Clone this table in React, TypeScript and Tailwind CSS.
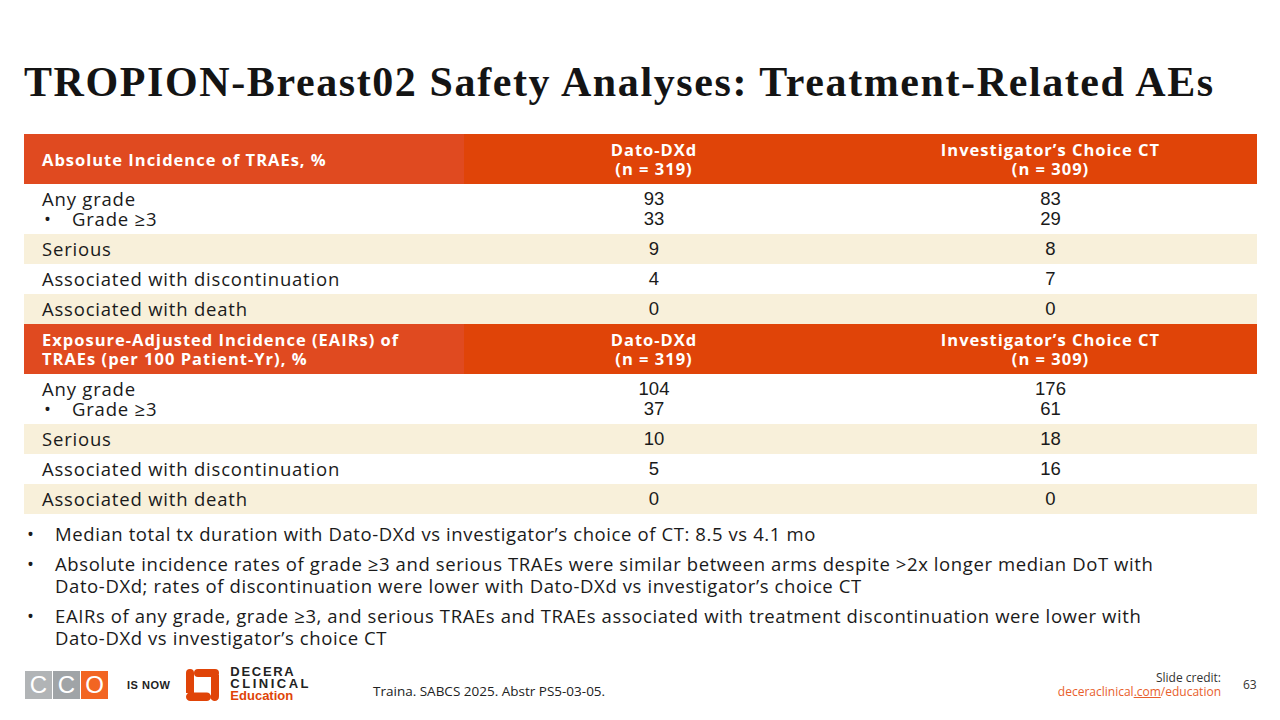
import React from 'react'

const sans = "font-['Open_Sans',sans-serif]"
const num = "font-['Liberation_Sans',Arial,sans-serif]"

type Row = { label: React.ReactNode; a: React.ReactNode; b: React.ReactNode; tall?: boolean; shade?: boolean }

function HeaderRow({ title }: { title: React.ReactNode }) {
  return (
    <div className="flex h-[50px] text-[16.5px] leading-[19px] font-bold tracking-[1px] text-white">
      <div className="flex w-[440px] items-center bg-[#e04a20] pl-[18px]">{title}</div>
      <div className="flex w-[380px] flex-col items-center justify-center bg-[#e04408]">
        <span>Dato-DXd</span>
        <span>(n = 319)</span>
      </div>
      <div className="flex flex-1 flex-col items-center justify-center bg-[#e04408]">
        <span>Investigator’s Choice CT</span>
        <span>(n = 309)</span>
      </div>
    </div>
  )
}

function BodyRow({ row }: { row: Row }) {
  return (
    <div className={`flex ${row.tall ? 'h-[50px]' : 'h-[30px]'} ${row.shade ? 'bg-[#f8f0da]' : 'bg-white'} text-[18.5px] leading-[20px] text-[#1a1a1a]`}>
      <div className="flex w-[440px] flex-col justify-center pl-[18px] tracking-[0.8px]">{row.label}</div>
      <div className={`flex w-[380px] flex-col items-center justify-center ${num}`}>{row.a}</div>
      <div className={`flex flex-1 flex-col items-center justify-center ${num}`}>{row.b}</div>
    </div>
  )
}

function Section({ title, rows }: { title: React.ReactNode; rows: Row[] }) {
  return (
    <>
      <HeaderRow title={title} />
      {rows.map((r, i) => (
        <BodyRow key={i} row={r} />
      ))}
    </>
  )
}

function AnyGrade() {
  return (
    <>
      <span>Any grade</span>
      <span className="flex">
        <span className="w-[30px] pl-[2px]">•</span>
        <span>Grade ≥3</span>
      </span>
    </>
  )
}

function Pair({ a, b }: { a: string; b: string }) {
  return (
    <>
      <span>{a}</span>
      <span>{b}</span>
    </>
  )
}

function DeceraMark() {
  return (
    <svg width="33" height="32" viewBox="0 0 33 32" fill="#e04408">
      <circle cx="4" cy="4" r="4" />
      <rect x="8" y="0" width="25" height="8" rx="4" />
      <rect x="0" y="4" width="8" height="20" />
      <rect x="0" y="23.5" width="25" height="8.5" rx="4.25" />
      <circle cx="28.7" cy="27.7" r="4.3" />
      <rect x="25" y="6" width="8" height="21.5" />
    </svg>
  )
}

function CcoLogo() {
  const box = "flex h-[28px] w-[27px] items-center justify-center text-white text-[24px] leading-none font-['Liberation_Sans',sans-serif]"
  return (
    <div className="flex gap-[1px]">
      <div className={`${box} bg-[#b1b4b6]`}>C</div>
      <div className={`${box} bg-[#a0a4a7]`}>C</div>
      <div className={`${box} bg-[#f26522]`}>O</div>
    </div>
  )
}

export default function App() {
  const first: Row[] = [
    { label: <AnyGrade />, a: <Pair a="93" b="33" />, b: <Pair a="83" b="29" />, tall: true },
    { label: 'Serious', a: '9', b: '8', shade: true },
    { label: 'Associated with discontinuation', a: '4', b: '7' },
    { label: 'Associated with death', a: '0', b: '0', shade: true },
  ]
  const second: Row[] = [
    { label: <AnyGrade />, a: <Pair a="104" b="37" />, b: <Pair a="176" b="61" />, tall: true },
    { label: 'Serious', a: '10', b: '18', shade: true },
    { label: 'Associated with discontinuation', a: '5', b: '16' },
    { label: 'Associated with death', a: '0', b: '0', shade: true },
  ]
  const bullets = [
    'Median total tx duration with Dato-DXd vs investigator’s choice of CT: 8.5 vs 4.1 mo',
    'Absolute incidence rates of grade ≥3 and serious TRAEs were similar between arms despite >2x longer median DoT with Dato-DXd; rates of discontinuation were lower with Dato-DXd vs investigator’s choice CT',
    'EAIRs of any grade, grade ≥3, and serious TRAEs and TRAEs associated with treatment discontinuation were lower with Dato-DXd vs investigator’s choice CT',
  ]

  return (
    <div className={`flex h-[720px] w-[1280px] flex-col bg-white ${sans}`}>
      <h1 className="pt-[58px] pl-[24px] font-['Liberation_Serif',serif] text-[42px] leading-[48px] font-bold tracking-[1.6px] whitespace-nowrap text-[#141414]">
        TROPION-Breast02 Safety Analyses: Treatment-Related AEs
      </h1>

      <div className="mt-[28px] ml-[24px] flex w-[1233px] flex-col">
        <Section title="Absolute Incidence of TRAEs, %" rows={first} />
        <Section
          title={
            <span>
              Exposure-Adjusted Incidence (EAIRs) of
              <br />
              TRAEs (per 100 Patient-Yr), %
            </span>
          }
          rows={second}
        />
      </div>

      <ul className="mt-[9px] ml-[24px] flex w-[1150px] flex-col gap-[8px] text-[18.5px] leading-[22px] tracking-[0.6px] text-[#1a1a1a]">
        {bullets.map((b, i) => (
          <li key={i} className="flex">
            <span className="w-[31px] shrink-0 pl-[3px]">•</span>
            <span>{b}</span>
          </li>
        ))}
      </ul>

      <div className="mt-auto mb-[18px] flex items-center pl-[25px] pr-[23px]">
        <CcoLogo />
        <span className="ml-[19px] font-['Liberation_Sans',sans-serif] text-[11px] font-bold tracking-[0.5px] text-[#222]">IS NOW</span>
        <div className="ml-[16px] flex items-center gap-[11px]">
          <DeceraMark />
          <div className="-mt-[2px] flex flex-col font-['Liberation_Sans',sans-serif] text-[13px] leading-[12px] font-bold">
            <span className="tracking-[1.7px] text-[#222]">DECERA</span>
            <span className="tracking-[2.5px] text-[#222]">CLINICAL</span>
            <span className="text-[#e04408]">Education</span>
          </div>
        </div>
        <span className="ml-[62px] mt-[12px] text-[13.5px] text-[#222]">Traina. SABCS 2025. Abstr PS5-03-05.</span>
        <div className="ml-auto flex flex-col items-end text-[12px] leading-[14px]">
          <span className="text-[#333]">Slide credit:</span>
          <span className="text-[#e8602c]">
            deceraclinical<span className="underline">.com</span>/education
          </span>
        </div>
        <span className="ml-[22px] w-[14px] text-[12px] text-[#333]">63</span>
      </div>
    </div>
  )
}
